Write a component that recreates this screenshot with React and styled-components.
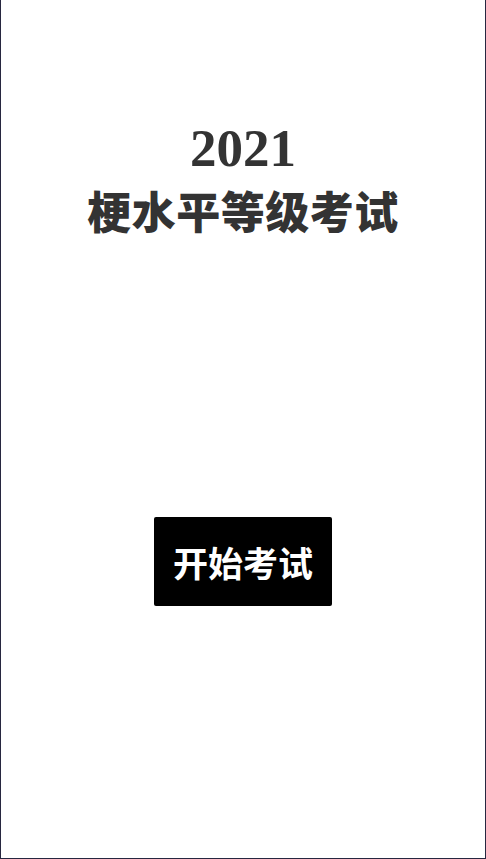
import React from "react";
import styled, { createGlobalStyle } from "styled-components";

const GlobalStyle = createGlobalStyle`
  html, body {
    margin: 0;
    padding: 0;
    background: #fff;
  }
  * { box-sizing: border-box; }
`;

function App() {
  return (
    <>
      <GlobalStyle />
      <Page>
        <Title>
          <Year>2021</Year>
          <Name>梗水平等级考试</Name>
        </Title>
        <StartButton>开始考试</StartButton>
      </Page>
    </>
  );
}

export default App;

const Page = styled.div`
  width: 486px;
  height: 859px;
  display: flex;
  flex-direction: column;
  align-items: center;
  border: 1px solid #272740;
  border-top: none;
  background: #fff;
  font-family: "Liberation Serif", "Noto Sans CJK SC", serif;
`;

const Title = styled.div`
  margin-top: 118px;
  display: flex;
  flex-direction: column;
  align-items: center;
  color: #333;
  font-weight: 700;
`;

const Year = styled.div`
  font-size: 53px;
  line-height: 60px;
`;

const Name = styled.div`
  font-family: "Noto Sans CJK SC", sans-serif;
  font-weight: 900;
  font-size: 44px;
  line-height: 64px;
  letter-spacing: 0.5px;
`;

const StartButton = styled.button`
  margin-top: 275px;
  width: 178px;
  height: 89px;
  border: none;
  border-radius: 2px;
  background: #000;
  color: #fff;
  font-family: "Noto Sans CJK SC", sans-serif;
  font-weight: 700;
  font-size: 35px;
  cursor: pointer;
`;
